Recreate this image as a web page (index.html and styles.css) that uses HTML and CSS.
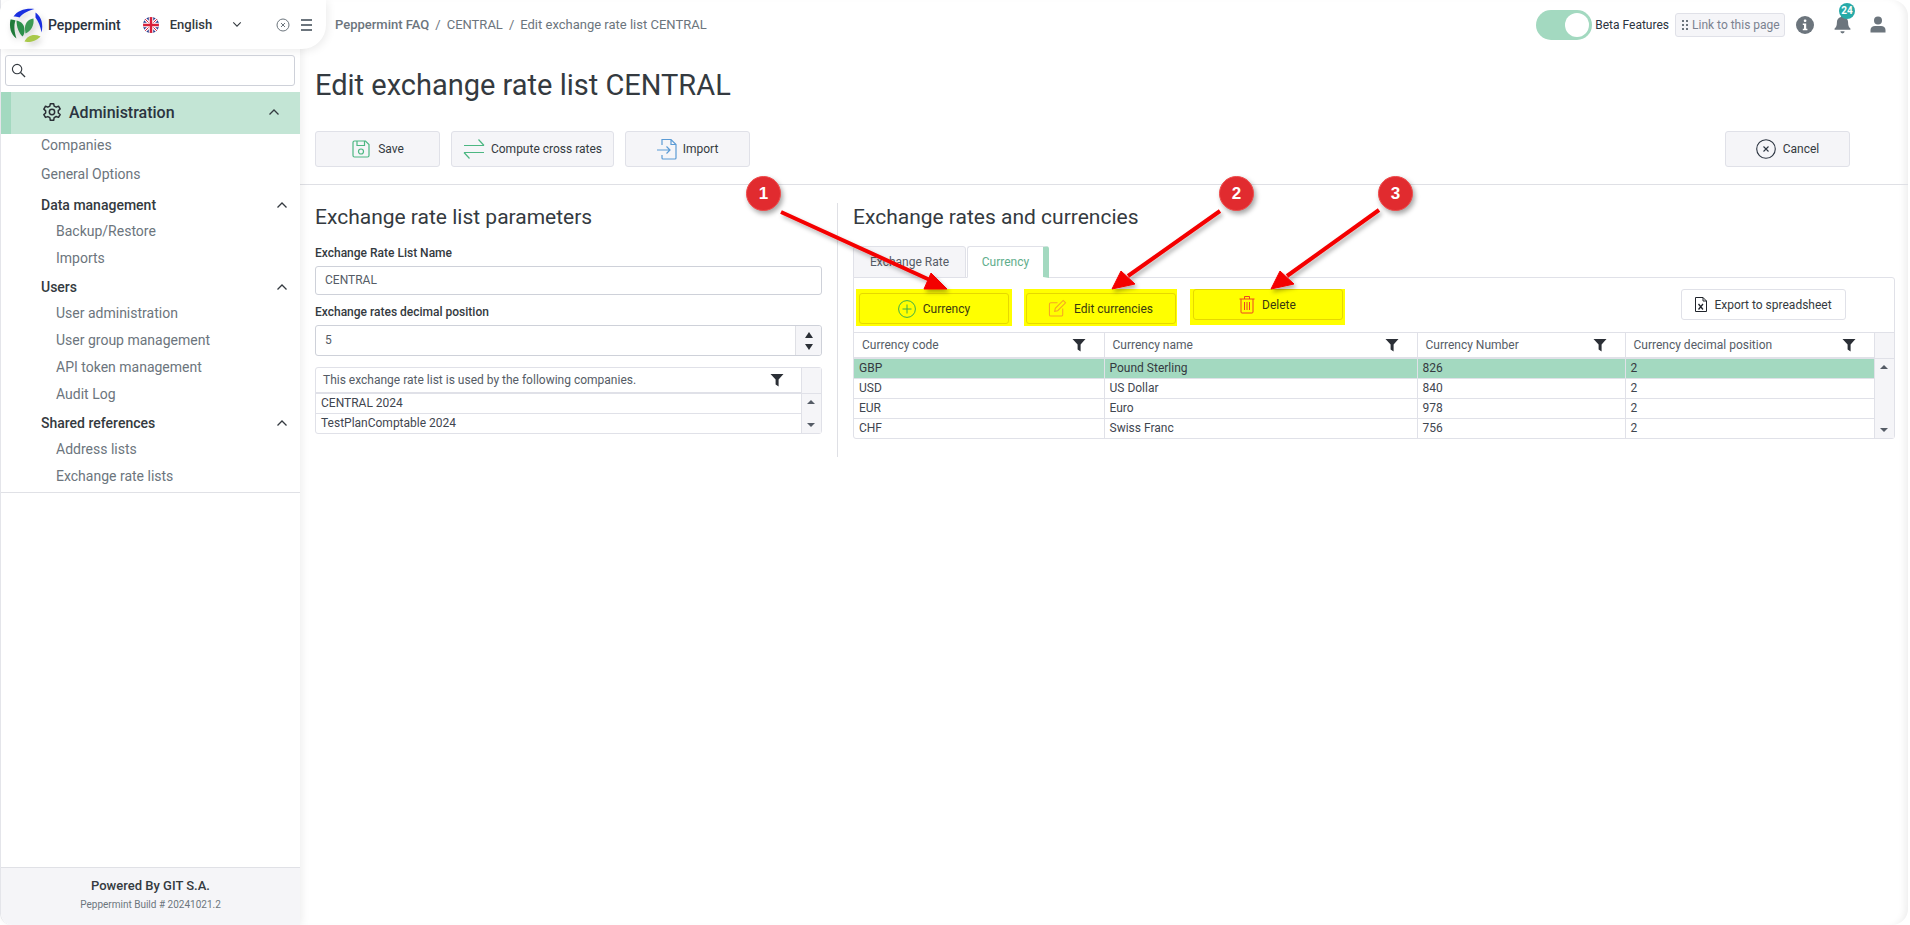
FILE: index.html
```html
<!DOCTYPE html>
<html lang="en">
<head>
<meta charset="utf-8">
<title>Edit exchange rate list CENTRAL</title>
<link rel="stylesheet" href="styles.css">
</head>
<body>
<svg class="defs" width="0" height="0" aria-hidden="true">
  <symbol id="funnel" viewBox="0 0 14 14"><path d="M0.500 1h13L8.600 6.600V13.500L5.600 11.500V6.600z" fill="#2b2f36"/></symbol>
  <symbol id="chev" viewBox="0 0 12 8"><path d="M1.500 6.500L6 2l4.500 4.500" fill="none" stroke="#343a40" stroke-width="1.300"/></symbol>
</svg>
<div class="app">
  <aside class="sidebar">
    <div class="brand">
      <svg class="logo" viewBox="-0.500 -0.500 34 34" width="34" height="34">
        <path d="M4 8C8 2 16-.5 25 .5C20 2 14 4 10 9C8 8 6 8 4 8z" fill="#1a2fe0"/>
        <path d="M26 4C32 8 34 16 32 24C31 18 29 13 26 9z" fill="#1a2fe0"/>
        <path d="M1 11C-.5 18 1 26 7 30C5 24 4 17 6 12C4 11 2.500 11 1 11z" fill="#1f7a3a"/>
        <path d="M7 12C12 13 15 16 15 22C15 25 14 27 13 28C9 24 7 18 7 12z" fill="#2b8f4a"/>
        <path d="M24 10C18 11 15 15 15.500 21L16 25C21 23 25 17 24 10z" fill="#3c9a55"/>
        <path d="M15 33C18 27 24 25 31 28C28 31 22 35 15 33z" fill="#a9c94a"/>
      </svg>
      <span class="brand-name">Peppermint</span>
      <svg class="flag" viewBox="0 0 16 16" width="16" height="16">
        <defs><clipPath id="fc"><circle cx="8" cy="8" r="8"/></clipPath></defs>
        <g clip-path="url(#fc)">
          <rect width="16" height="16" fill="#2a3f8f"/>
          <path d="M0 0L16 16M16 0L0 16" stroke="#fff" stroke-width="3"/>
          <path d="M0 0L16 16M16 0L0 16" stroke="#d8203a" stroke-width="1"/>
          <path d="M8 0V16M0 8H16" stroke="#fff" stroke-width="4.500"/>
          <path d="M8 0V16M0 8H16" stroke="#d8203a" stroke-width="2.500"/>
        </g>
      </svg>
      <span class="lang">English</span>
      <svg class="lang-chev" viewBox="0 0 12 8" width="10" height="7"><path d="M1.500 1.500L6 6l4.500-4.500" fill="none" stroke="#343a40" stroke-width="1.300"/></svg>
      <svg class="brand-close" viewBox="0 0 14 14" width="14" height="14"><circle cx="7" cy="7" r="6" fill="none" stroke="#6c757d"/><path d="M5 5l4 4M9 5l-4 4" stroke="#6c757d"/></svg>
      <span class="burger"><i></i><i></i><i></i></span>
    </div>
    <div class="search">
      <svg viewBox="0 0 16 16" width="15" height="15"><circle cx="6.500" cy="6.500" r="5" fill="none" stroke="#343a40" stroke-width="1.200"/><path d="M10.200 10.200L15 15" stroke="#343a40" stroke-width="1.400"/></svg>
    </div>
    <div class="module">
      <svg class="gear" viewBox="0 0 24 24" width="20" height="20" fill="none" stroke="#2b2f36" stroke-width="1.800" stroke-linejoin="round"><circle cx="12" cy="12" r="3.200"/><path d="M10 2h4l.6 3 2.400 1.200 2.800-1.200 2 3.400-2.300 2 .1 2.800 2.200 1.800-2 3.400-2.800-1-2.400 1.300L14 22h-4l-.6-3.200L7 17.500l-2.800 1-2-3.400 2.200-1.900V10.600L2.200 8.500l2-3.400L7 6.200 9.400 5z"/></svg>
      <span class="module-name">Administration</span>
      <svg class="chev module-chev"><use href="#chev"/></svg>
    </div>
    <nav class="nav">
      <a class="l1 comp">Companies</a>
      <a class="l1 gen">General Options</a>
      <div class="grp first"><span>Data management</span><svg class="chev"><use href="#chev"/></svg></div>
      <a class="l2">Backup/Restore</a>
      <a class="l2">Imports</a>
      <div class="grp"><span>Users</span><svg class="chev"><use href="#chev"/></svg></div>
      <a class="l2">User administration</a>
      <a class="l2">User group management</a>
      <a class="l2">API token management</a>
      <a class="l2">Audit Log</a>
      <div class="grp"><span>Shared references</span><svg class="chev"><use href="#chev"/></svg></div>
      <a class="l2">Address lists</a>
      <a class="l2">Exchange rate lists</a>
    </nav>
    <footer class="foot">
      <div class="powered">Powered By GIT S.A.</div>
      <div class="build">Peppermint Build # 20241021.2</div>
    </footer>
  </aside>

  <main class="main">
    <header class="topbar">
      <div class="crumbs"><b>Peppermint FAQ</b><span>/</span><a>CENTRAL</a><span>/</span><a>Edit exchange rate list CENTRAL</a></div>
      <div class="top-right">
        <span class="toggle"><i></i></span>
        <span class="beta">Beta Features</span>
        <span class="link-btn"><svg viewBox="0 0 6 10" width="6" height="10"><g fill="#6c757d"><rect width="2" height="2"/><rect x="4" width="2" height="2"/><rect y="4" width="2" height="2"/><rect x="4" y="4" width="2" height="2"/><rect y="8" width="2" height="2"/><rect x="4" y="8" width="2" height="2"/></g></svg>Link to this page</span>
        <svg class="ti info" viewBox="0 0 18 18" width="18" height="18"><circle cx="9" cy="9" r="9" fill="#6c757d"/><rect x="7.800" y="3.500" width="2.600" height="2.600" rx="1" fill="#fff"/><path d="M6.800 7.500h3.400v5.200h1.200v1.500H6.800v-1.500H8V9H6.800z" fill="#fff"/></svg>
        <span class="bell">
          <svg viewBox="0 0 16 18" width="17" height="19"><path d="M8 .5c.9 0 1.500.6 1.500 1.400 2.500.6 3.800 2.600 3.800 5.100 0 3 .7 4.300 2.200 5.800v1.200H.5v-1.200C2 11.300 2.700 10 2.700 7c0-2.500 1.300-4.500 3.800-5.100C6.500 1.100 7.100.5 8 .5zM6 15.500h4a2 2 0 0 1-4 0z" fill="#6c757d"/></svg>
          <em>24</em>
        </span>
        <svg class="ti user" viewBox="0 0 16 17" width="16" height="17"><circle cx="8" cy="4.500" r="4" fill="#6c757d"/><path d="M.5 16.500V14c0-2.500 2-4 4.500-4h6c2.500 0 4.500 1.500 4.500 4v2.500z" fill="#6c757d"/></svg>
      </div>
    </header>

    <h1 class="title">Edit exchange rate list CENTRAL</h1>

    <div class="actions">
      <button class="btn w-save"><svg viewBox="0 0 20 20" width="20" height="20" fill="none" stroke="#4cb782" stroke-width="1.200"><path d="M2 3.500A1.500 1.500 0 0 1 3.500 2h11L18 5.500v11a1.500 1.500 0 0 1-1.500 1.500h-13A1.500 1.500 0 0 1 2 16.500z"/><path d="M6 2v4.500h7.500V2"/><circle cx="10" cy="12.500" r="2.500"/></svg>Save</button>
      <button class="btn w-compute"><svg viewBox="0 0 22 22" width="22" height="22" fill="none" stroke="#4cb782" stroke-width="1.200"><path d="M1 7.500h20M15.500 1.500L21 7.500M1 14.500h20M6.500 20.500L1 14.500"/></svg>Compute cross rates</button>
      <button class="btn w-import"><svg viewBox="0 0 22 22" width="22" height="22" fill="none" stroke="#5b9bd5" stroke-width="1.200"><path d="M5 7V1.500h9l5 5V20a1 1 0 0 1-1 1H6a1 1 0 0 1-1-1v-3M14 1.500v5h5"/><path d="M0 12h13M9.500 8.500L13 12l-3.500 3.500"/></svg>Import</button>
      <button class="btn w-cancel"><svg viewBox="0 0 20 20" width="20" height="20" fill="none" stroke="#2b3440" stroke-width="1.100"><circle cx="10" cy="10" r="9.300"/><path d="M7.500 7.500l5 5M12.500 7.500l-5 5"/></svg>Cancel</button>
    </div>

    <div class="columns">
      <section class="left">
        <h2>Exchange rate list parameters</h2>
        <label class="lab">Exchange Rate List Name</label>
        <div class="field">CENTRAL</div>
        <label class="lab second">Exchange rates decimal position</label>
        <div class="field number"><span>5</span><span class="spin"><i class="up"></i><i class="down"></i></span></div>
        <div class="grid mini">
          <table>
            <thead><tr><th><div class="th">This exchange rate list is used by the following companies.<svg class="fn"><use href="#funnel"/></svg></div></th></tr></thead>
            <tbody>
              <tr><td>CENTRAL 2024</td></tr>
              <tr><td>TestPlanComptable 2024</td></tr>
            </tbody>
          </table>
          <div class="scroll"><div class="scroll-head"></div><div class="scroll-track"><i class="sup"></i><i class="sdown"></i></div></div>
        </div>
      </section>
      <section class="right">
        <h2>Exchange rates and currencies</h2>
        <div class="tabs"><span class="tab">Exchange Rate</span><span class="tab on">Currency</span></div>
        <div class="panel">
          <div class="tools">
            <span class="hl"><button class="btn ybtn b1"><svg viewBox="0 0 18 18" width="18" height="18" fill="none" stroke="#3fae49" stroke-width="1"><circle cx="9" cy="9" r="8.400"/><path d="M9 4.500v9M4.500 9h9"/></svg>Currency</button></span>
            <span class="hl h2"><button class="btn ybtn b2"><svg viewBox="0 0 20 20" width="19" height="19" fill="none" stroke="#f5a623" stroke-width="1.100"><path d="M10 4H3a1.500 1.500 0 0 0-1.500 1.500v11A1.500 1.500 0 0 0 3 18h11a1.500 1.500 0 0 0 1.500-1.500V10"/><path d="M7 13l.7-3.200L16 1.500l2.500 2.500-8.300 8.300z"/></svg>Edit currencies</button></span>
            <span class="hl h3"><button class="btn ybtn b3"><svg viewBox="0 0 16 18" width="16" height="19" fill="none" stroke="#ee4422" stroke-width="1"><path d="M.5 3.500h15M5.500 3.500V1h5v2.500M2 3.500v13a1 1 0 0 0 1 1h10a1 1 0 0 0 1-1v-13M5.500 6.500v8M8 6.500v8M10.500 6.500v8"/></svg>Delete</button></span>
            <button class="btn export"><svg viewBox="0 0 12 15" width="12" height="15" fill="none" stroke="#20242b"><path d="M.5.500h7.500l3.500 3.500v10.500H.5zM8 .5v3.500h3.500"/><path d="M3.500 7l4.500 5.500M8 7l-4.500 5.500" stroke-width="1.300"/></svg>Export to spreadsheet</button>
          </div>
          <div class="grid big">
            <table>
              <colgroup><col class="c1"><col class="c2"><col class="c3"><col></colgroup>
              <thead><tr>
                <th><div class="th">Currency code<svg class="fn"><use href="#funnel"/></svg></div></th>
                <th><div class="th">Currency name<svg class="fn"><use href="#funnel"/></svg></div></th>
                <th><div class="th">Currency Number<svg class="fn"><use href="#funnel"/></svg></div></th>
                <th><div class="th">Currency decimal position<svg class="fn"><use href="#funnel"/></svg></div></th>
              </tr></thead>
              <tbody>
                <tr class="sel"><td>GBP</td><td>Pound Sterling</td><td>826</td><td>2</td></tr>
                <tr><td>USD</td><td>US Dollar</td><td>840</td><td>2</td></tr>
                <tr><td>EUR</td><td>Euro</td><td>978</td><td>2</td></tr>
                <tr><td>CHF</td><td>Swiss Franc</td><td>756</td><td>2</td></tr>
              </tbody>
            </table>
            <div class="scroll"><div class="scroll-head"></div><div class="scroll-track"><i class="sup"></i><i class="sdown"></i></div></div>
          </div>
        </div>
      </section>
    </div>
  </main>
</div>

<svg class="arrows" width="1910" height="925" viewBox="0 0 1910 925" aria-hidden="true">
  <defs><filter id="sh" x="-20%" y="-20%" width="140%" height="140%"><feDropShadow dx="2" dy="3" stdDeviation="2" flood-color="#000" flood-opacity=".3"/></filter></defs>
  <g fill="#f40000" stroke="#f40000" filter="url(#sh)">
    <path d="M781 212L930 280" stroke-width="4" fill="none"/>
    <path d="M947 289L924 289L931 273z" stroke-width="1"/>
    <path d="M1220 211L1128 276" stroke-width="4" fill="none"/>
    <path d="M1112 289L1121 271L1135 284z" stroke-width="1"/>
    <path d="M1379 210L1287 276" stroke-width="4" fill="none"/>
    <path d="M1271 289L1280 271L1294 284z" stroke-width="1"/>
  </g>
</svg>
<span class="pin p1">1</span>
<span class="pin p2">2</span>
<span class="pin p3">3</span>
</body>
</html>
```

FILE: styles.css
```css
* { box-sizing: border-box; }
html, body { margin: 0; height: 100%; }
body {
  font-family: Roboto, "Liberation Sans", sans-serif;
  font-size: 12px;
  color: #343a40;
  background: #fff;
  overflow: hidden;
  position: relative;
}
.defs { position: absolute; }
.app { display: flex; height: 925px; }

/* sidebar */
.sidebar {
  width: 300px;
  flex: none;
  display: flex;
  flex-direction: column;
  background: #fff;
  border-left: 1px solid #e4e5ea;
  border-radius: 0 0 0 12px;
  box-shadow: 2px 0 8px rgba(0, 0, 0, .07);
  position: relative;
  z-index: 2;
}
.brand {
  width: 326px;
  height: 49px;
  margin-left: -1px;
  flex: none;
  display: flex;
  align-items: center;
  background: #fff;
  border-radius: 12px 0 24px 0;
  box-shadow: 2px 2px 8px rgba(0, 0, 0, .08);
  padding-left: 9px;
}
.logo { flex: none; filter: drop-shadow(2px 3px 3px rgba(0, 0, 0, .18)); }
.brand-name { margin-left: 5px; font-size: 14px; font-weight: 500; color: #2b3440; }
.flag { margin-left: 22px; }
.lang { margin-left: 11px; font-size: 13px; font-weight: 500; color: #343a40; }
.lang-chev { margin-left: 20px; }
.brand-close { margin-left: 34px; }
.burger { margin-left: 11px; display: flex; flex-direction: column; gap: 3px; }
.burger i { display: block; width: 11px; height: 2px; background: #6c757d; }
.search {
  height: 31px;
  flex: none;
  margin: 6px 5px 6px 4px;
  border: 1px solid #ced1d9;
  border-radius: 3px;
  padding: 7px 5px;
  display: flex;
}
.module {
  height: 42px;
  flex: none;
  display: flex;
  align-items: center;
  background: #c3e5d5;
  border-left: 10px solid #a3d9c0;
  padding: 0 0 2px 31px;
}
.module-name { margin-left: 7px; font-size: 16px; font-weight: 500; color: #2b3440; }
.chev { width: 12px; height: 8px; margin-left: auto; flex: none; }
.module-chev { margin-right: 20px; }
.nav { display: flex; flex-direction: column; padding: 0 0 2px 40px; border-bottom: 1px solid #e0e1e6; flex: none; }
.nav a { display: block; font-size: 14px; color: #6c757d; height: 27px; line-height: 27px; }
.nav .l1.comp { height: 22px; line-height: 22px; }
.nav .l1.gen { height: 36px; line-height: 36px; }
.nav .l2 { padding-left: 15px; }
.grp {
  display: flex;
  align-items: center;
  height: 28px;
  padding-top: 2px;
  font-size: 14px;
  font-weight: 500;
  color: #343a40;
  padding-right: 12px;
}
.grp.first { height: 26px; padding-top: 0; }
.foot {
  margin-top: auto;
  height: 58px;
  background: #f5f5f8;
  border-top: 1px solid #e0e1e6;
  border-radius: 0 0 0 12px;
  text-align: center;
}
.powered { margin-top: 10px; font-size: 13px; font-weight: 500; color: #343a40; line-height: 16px; }
.build { margin-top: 4px; font-size: 10px; color: #6c757d; line-height: 14px; }

/* main */
.main {
  flex: 1;
  margin-right: 2px;
  background: #fff;
  border-radius: 0 16px 16px 0;
  box-shadow: inset -7px 0 7px -4px rgba(0, 0, 0, .07);
  display: flex;
  flex-direction: column;
  min-width: 0;
}
.topbar { height: 49px; flex: none; display: flex; align-items: center; padding-left: 35px; }
.crumbs { display: flex; gap: 6px; font-size: 13px; color: #6c757d; }
.crumbs b { font-weight: 500; }
.top-right { margin-left: auto; display: flex; align-items: center; padding-right: 22px; }
.toggle {
  width: 56px;
  height: 30px;
  border-radius: 15px;
  background: #a3d9c0;
  display: flex;
  align-items: center;
  justify-content: flex-end;
  padding-right: 3px;
}
.toggle i { width: 24px; height: 24px; border-radius: 50%; background: #fff; }
.beta { margin-left: 3px; font-size: 12px; color: #2b3440; }
.link-btn {
  margin-left: 6px;
  height: 24px;
  width: 110px;
  display: flex;
  align-items: center;
  gap: 4px;
  padding-left: 6px;
  background: #f5f5f8;
  border: 1px solid #e0e1e8;
  border-radius: 3px;
  font-size: 12px;
  color: #7b8290;
  white-space: nowrap;
}
.ti { flex: none; }
.info { margin-left: 11px; }
.bell { margin-left: 20px; position: relative; display: flex; }
.bell em {
  position: absolute;
  left: 5px;
  top: -12px;
  width: 16px;
  height: 16px;
  border-radius: 50%;
  background: #27aaa8;
  color: #fff;
  font: 700 10px/16px Roboto, sans-serif;
  text-align: center;
}
.user { margin-left: 19px; }
.title {
  margin: 17px 0 0 15px;
  height: 38px;
  font-size: 29px;
  line-height: 38px;
  font-weight: 400;
  color: #343a40;
}
.actions {
  margin-top: 27px;
  height: 54px;
  flex: none;
  padding: 0 58px 0 15px;
  display: flex;
  gap: 11px;
  align-items: flex-start;
  border-bottom: 1px solid #dfe0e5;
}
.btn {
  height: 36px;
  display: inline-flex;
  align-items: center;
  justify-content: center;
  gap: 7px;
  background: #f5f5f8;
  border: 1px solid #e0e1e8;
  border-radius: 3px;
  font: 400 12px Roboto, sans-serif;
  color: #343a40;
  padding: 0;
}
.w-save { width: 125px; }
.w-compute { width: 163px; gap: 6px; }
.w-import { width: 125px; gap: 4px; }
.w-cancel { width: 125px; margin-left: auto; }

.columns { display: flex; padding: 18px 0 0 15px; }
.left { width: 523px; flex: none; border-right: 1px solid #dfe0e5; height: 254px; padding-right: 15px; }
.right { width: 1057px; padding-left: 15px; flex: none; }
h2 { margin: 0; font-size: 21px; line-height: 28px; font-weight: 400; color: #343a40; }
.lab { display: block; margin-top: 14px; font-size: 12px; line-height: 16px; font-weight: 500; color: #343a40; }
.lab.second { margin-top: 9px; }
.field {
  margin-top: 5px;
  height: 29px;
  border: 1px solid #ced1d9;
  border-radius: 3px;
  padding: 0 9px;
  line-height: 27px;
  font-size: 12px;
  color: #555c66;
  display: flex;
}
.field.number { height: 31px; line-height: 29px; }
.spin {
  margin: 0 -9px 0 auto;
  width: 26px;
  background: #f5f5f8;
  border-left: 1px solid #dfe0e5;
  border-radius: 0 3px 3px 0;
  display: flex;
  flex-direction: column;
  align-items: center;
  justify-content: center;
  gap: 6px;
}
.spin i { width: 0; height: 0; border-left: 4px solid transparent; border-right: 4px solid transparent; }
.spin .up { border-bottom: 6px solid #2b2f36; }
.spin .down { border-top: 6px solid #2b2f36; }

.grid { display: flex; border: 1px solid #e0e1e8; }
.grid table { flex: 1; border-collapse: collapse; table-layout: fixed; width: 100%; min-width: 0; }
.grid th { height: 25px; padding: 0; font-weight: 400; border-bottom: 2px solid #e0e1e8; border-right: 1px solid #e0e1e8; text-align: left; }
.th { display: flex; align-items: center; justify-content: space-between; padding: 0 18px 0 8px; color: #555c66; white-space: nowrap; }
.fn { width: 14px; height: 14px; flex: none; }
.grid td { height: 20px; padding: 0 5px; border-bottom: 1px solid #e0e1e8; border-right: 1px solid #e0e1e8; color: #3f4650; line-height: 18px; }
.grid tr:last-child td { border-bottom: 0; }
.grid tr.sel td { background: #a3d9c0; color: #343a40; }
.scroll { width: 19.5px; flex: none; display: flex; flex-direction: column; background: #f5f5f8; }
.scroll-head { height: 26px; border-bottom: 1px solid #e0e1e8; flex: none; }
.scroll-track { flex: 1; display: flex; flex-direction: column; justify-content: space-between; align-items: center; padding: 6px 0; }
.scroll-track i { width: 0; height: 0; border-left: 4px solid transparent; border-right: 4px solid transparent; }
.scroll-track .sup { border-bottom: 4px solid #555c66; }
.scroll-track .sdown { border-top: 4px solid #555c66; }

.mini { margin-top: 11px; height: 67px; border-radius: 3px; }
.mini .th { padding-left: 7px; padding-right: 17px; }

.tabs { display: flex; margin-top: 15px; height: 32px; gap: 1px; position: relative; z-index: 1; margin-bottom: -1px; }
.tab { height: 32px; width: 113px; background: #f5f5f8; border: 1px solid #e0e1e8; border-radius: 3px 3px 0 0; text-align: center; line-height: 30px; font-size: 12px; color: #555c66; }
.tab.on { width: 82px; background: #fff; border-bottom-color: #fff; border-right: 6px solid #a3d9c0; color: #5fae8c; }
.panel { height: 162px; border: 1px solid #e0e1e8; border-radius: 0 3px 3px 3px; display: flex; flex-direction: column; }
.tools { height: 54px; flex: none; display: flex; padding-left: 2px; align-items: flex-start; padding-top: 11px; }
.hl { width: 156px; height: 37px; background: #ffff00; display: flex; align-items: flex-start; justify-content: center; padding-top: 4px; flex: none; }
.hl.h2 { width: 153px; margin-left: 12px; }
.hl.h3 { width: 155px; margin-left: 13px; height: 36px; padding-top: 0; }
.ybtn { background: #ffff00; border-color: #e6d800; height: 31px; font-size: 12px; color: #3a3a10; }
.b1 { width: 150px; }
.b2 { width: 150px; }
.b3 { width: 150px; }
.export {
  margin-left: auto;
  margin-right: 48px;
  width: 165px;
  height: 31px;
  background: #fff;
}
.big { border: 0; border-top: 1px solid #e0e1e8; height: 106px; }
.c1 { width: 250px; }
.c2 { width: 313px; }
.c3 { width: 208px; }

/* annotations */
.arrows { position: absolute; left: 0; top: 0; z-index: 5; pointer-events: none; }
.pin {
  position: absolute;
  z-index: 6;
  width: 35px;
  height: 35px;
  border-radius: 50%;
  background: #e12b2f;
  border: 1px solid #f04a4a;
  box-shadow: 2px 3px 5px rgba(0, 0, 0, .35);
  color: #fff;
  font: 700 17px/33px "Liberation Sans", sans-serif;
  text-align: center;
}
.p1 { left: 746px; top: 176px; }
.p2 { left: 1219px; top: 176px; }
.p3 { left: 1378px; top: 176px; }
```
